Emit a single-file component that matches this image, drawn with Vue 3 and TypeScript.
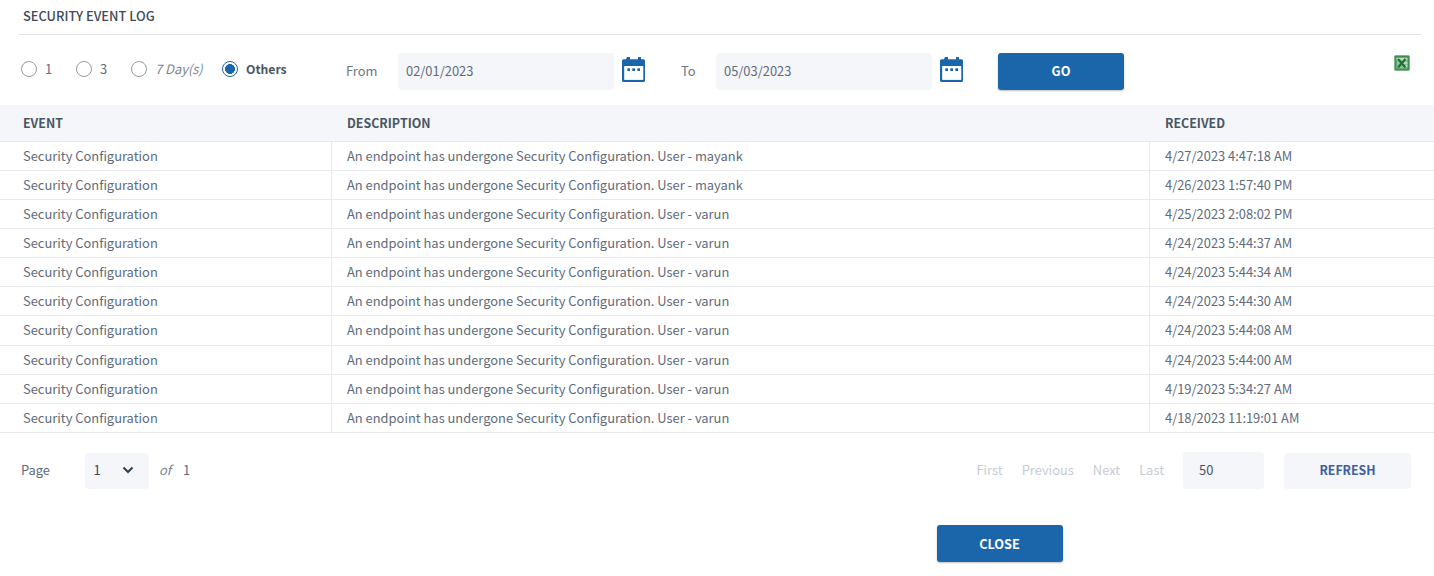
<template>
  <div class="page">
    <div class="title">SECURITY EVENT LOG</div>

    <div class="filters">
      <label v-for="opt in ranges" :key="opt.label" class="radio" :class="opt.cls">
        <span class="dot" :class="{ on: opt.on }"></span>
        <span class="radio-text">{{ opt.label }}</span>
      </label>

      <span class="date-label from">From</span>
      <div class="field date">02/01/2023</div>
      <svg class="cal" width="24" height="27" viewBox="0 0 24 27">
        <path fill="#1b66ab" d="M5 1h3v2.300h8v-2.300h3v2.300h2.500a1.500 1.500 0 0 1 1.500 1.500v19.700a1.500 1.500 0 0 1-1.500 1.500h-20a1.500 1.500 0 0 1-1.500-1.500v-19.700a1.500 1.500 0 0 1 1.500-1.500h2.500z" />
        <rect x="2.200" y="10" width="19.100" height="13.900" fill="#fff" />
        <rect x="5.300" y="12.300" width="2.700" height="2.700" fill="#1b66ab" />
        <rect x="10.300" y="12.300" width="2.700" height="2.700" fill="#1b66ab" />
        <rect x="15.300" y="12.300" width="2.700" height="2.700" fill="#1b66ab" />
      </svg>

      <span class="date-label to">To</span>
      <div class="field date">05/03/2023</div>
      <svg class="cal" width="24" height="27" viewBox="0 0 24 27">
        <path fill="#1b66ab" d="M5 1h3v2.300h8v-2.300h3v2.300h2.500a1.500 1.500 0 0 1 1.500 1.500v19.700a1.500 1.500 0 0 1-1.500 1.500h-20a1.500 1.500 0 0 1-1.500-1.500v-19.700a1.500 1.500 0 0 1 1.500-1.500h2.500z" />
        <rect x="2.200" y="10" width="19.100" height="13.900" fill="#fff" />
        <rect x="5.300" y="12.300" width="2.700" height="2.700" fill="#1b66ab" />
        <rect x="10.300" y="12.300" width="2.700" height="2.700" fill="#1b66ab" />
        <rect x="15.300" y="12.300" width="2.700" height="2.700" fill="#1b66ab" />
      </svg>

      <button class="primary go">GO</button>

      <svg class="excel" width="16" height="16" viewBox="0 0 16 16">
        <rect x="0.500" y="0.500" width="15" height="15" rx="1" fill="#3f8f4f" stroke="#7fb68a" />
        <rect x="2.500" y="2.500" width="11" height="11" fill="#8fc29a" />
        <path d="M2.500 4h11M9 8h4.500M9 11h4.500" stroke="#e6f2e8" stroke-width="1" />
        <path d="M4 4l7.500 8.500M11.500 4L4 12.500" stroke="#1f7034" stroke-width="2.200" />
      </svg>
    </div>

    <div class="table">
      <div class="row head">
        <div class="cell c1">EVENT</div>
        <div class="cell c2">DESCRIPTION</div>
        <div class="cell c3">RECEIVED</div>
      </div>
      <div v-for="(r, i) in rows" :key="i" class="row body">
        <div class="cell c1">Security Configuration</div>
        <div class="cell c2">An endpoint has undergone Security Configuration. User - {{ r.user }}</div>
        <div class="cell c3">{{ r.time }}</div>
      </div>
    </div>

    <div class="pager">
      <span class="page-label">Page</span>
      <div class="field select">
        <span>1</span>
        <svg width="12" height="8" viewBox="0 0 12 8">
          <path d="M1.500 1.500L6 6l4.500-4.500" fill="none" stroke="#2c3e50" stroke-width="2" />
        </svg>
      </div>
      <em class="of">of</em>
      <span class="total">1</span>

      <div class="links">
        <span>First</span>
        <span>Previous</span>
        <span>Next</span>
        <span>Last</span>
      </div>
      <div class="field size">50</div>
      <button class="refresh">REFRESH</button>
    </div>

    <div class="footer">
      <button class="primary close">CLOSE</button>
    </div>
  </div>
</template>

<script setup lang="ts">
const ranges = [
  { label: '1', cls: 'r1', on: false },
  { label: '3', cls: 'r3', on: false },
  { label: '7 Day(s)', cls: 'r7', on: false },
  { label: 'Others', cls: 'rother', on: true },
]

const rows = [
  { user: 'mayank', time: '4/27/2023 4:47:18 AM' },
  { user: 'mayank', time: '4/26/2023 1:57:40 PM' },
  { user: 'varun', time: '4/25/2023 2:08:02 PM' },
  { user: 'varun', time: '4/24/2023 5:44:37 AM' },
  { user: 'varun', time: '4/24/2023 5:44:34 AM' },
  { user: 'varun', time: '4/24/2023 5:44:30 AM' },
  { user: 'varun', time: '4/24/2023 5:44:08 AM' },
  { user: 'varun', time: '4/24/2023 5:44:00 AM' },
  { user: 'varun', time: '4/19/2023 5:34:27 AM' },
  { user: 'varun', time: '4/18/2023 11:19:01 AM' },
]
</script>

<style>
html,
body {
  margin: 0;
  background: #fff;
}
</style>

<style scoped>
.page {
  width: 1434px;
  height: 576px;
  overflow: hidden;
  font-family: 'Noto Sans CJK SC', 'Noto Sans', sans-serif;
  font-size: 12.900px;
  line-height: 18px;
  color: #5f6b7a;
}

.title {
  margin: 0 13px 0 19px;
  height: 35px;
  padding: 7px 0 0 4px;
  box-sizing: border-box;
  border-bottom: 1px solid #e2e4e8;
  font-size: 12.850px;
  font-weight: 500;
  color: #3e4a59;
}

.filters {
  display: flex;
  align-items: center;
  height: 37px;
  margin-top: 18px;
}

.radio {
  display: flex;
  align-items: center;
  gap: 8px;
  margin-top: -6px;
}

.r1 {
  margin-left: 21px;
  width: 55px;
}

.r3 {
  width: 55px;
}

.r7 {
  width: 91px;
  font-style: italic;
  color: #7b8592;
}

.rother {
  width: 110px;
  font-size: 12.200px;
  font-weight: 700;
  color: #4a5563;
}

.dot {
  width: 16px;
  height: 16px;
  border: 1px solid #9a9a9a;
  border-radius: 50%;
  box-sizing: border-box;
  background: #fff;
}

.dot.on {
  border-color: #1b66ab;
  background: radial-gradient(circle, #1b66ab 0 4.700px, #fff 5.200px);
}

.date-label {
  color: #6e7884;
  margin-bottom: 2px;
}

.from {
  margin-left: 14px;
  width: 52px;
}

.to {
  margin-left: 35px;
  width: 35px;
}

.field {
  background: #f4f6fa;
  border-radius: 4px;
  box-sizing: border-box;
}

.date {
  width: 216px;
  height: 37px;
  padding-left: 8px;
  line-height: 35px;
}

.cal {
  margin-left: 8px;
  margin-top: -5px;
}

.primary {
  border: none;
  border-radius: 3px;
  background: #1b66ab;
  color: #fff;
  font: 700 12.700px/18px 'Noto Sans CJK SC', 'Noto Sans', sans-serif;
  box-shadow: 0 1px 2px rgba(0, 0, 0, 0.25);
  padding: 0;
}

.go {
  width: 126px;
  height: 37px;
  margin-left: 34px;
  padding-bottom: 2px;
}

.excel {
  margin-left: 270px;
  margin-top: -17px;
}

.table {
  margin-top: 15px;
}

.row {
  display: grid;
  grid-template-columns: 331px 818px 285px;
  box-sizing: border-box;
  border-bottom: 1px solid #e8e9ec;
}

.head {
  height: 37px;
  background: #f4f6fa;
  font-size: 12.400px;
  font-weight: 700;
  color: #4a5563;
  align-items: center;
}

.body {
  height: 29px;
}

.body:nth-child(8) {
  height: 30px;
}

.body:nth-child(8) .cell {
  padding-bottom: 2px;
}

.cell {
  padding-left: 23px;
  display: flex;
  align-items: center;
  box-sizing: border-box;
}

.c2,
.c3 {
  padding-left: 16px;
}

.body .c2,
.body .c3 {
  border-left: 1px solid #e8e9ec;
  padding-left: 15px;
}

.pager {
  display: flex;
  align-items: center;
  height: 37px;
  margin-top: 19px;
  padding-left: 21px;
}

.page-label {
  width: 64px;
  margin-bottom: 2px;
}

.select {
  width: 64px;
  height: 36px;
  padding: 0 15px 2px 8.500px;
  display: flex;
  align-items: center;
  justify-content: space-between;
  color: #3e4a59;
}

.of {
  margin-left: 10px;
  width: 24px;
  margin-bottom: 2px;
  color: #7b8592;
}

.total {
  margin-bottom: 2px;
}

.links {
  display: flex;
  gap: 19px;
  margin-left: auto;
  margin-bottom: 2px;
  color: #c9ccd2;
}

.size {
  width: 81px;
  height: 37px;
  margin-left: 19px;
  padding-left: 16px;
  line-height: 35px;
  color: #4a5563;
}

.refresh {
  width: 127px;
  height: 36px;
  margin: 0 23px 0 20px;
  border: none;
  border-radius: 4px;
  background: #f4f6fa;
  color: #3f5ea4;
  font: 700 12.300px/18px 'Noto Sans CJK SC', 'Noto Sans', sans-serif;
  padding: 0 0 2px;
}

.footer {
  display: flex;
  justify-content: center;
  margin-top: 36px;
  padding-left: 565px;
  box-sizing: border-box;
  width: 1434px;
}

.close {
  width: 126px;
  height: 37px;
  padding-top: 1px;
}
</style>
